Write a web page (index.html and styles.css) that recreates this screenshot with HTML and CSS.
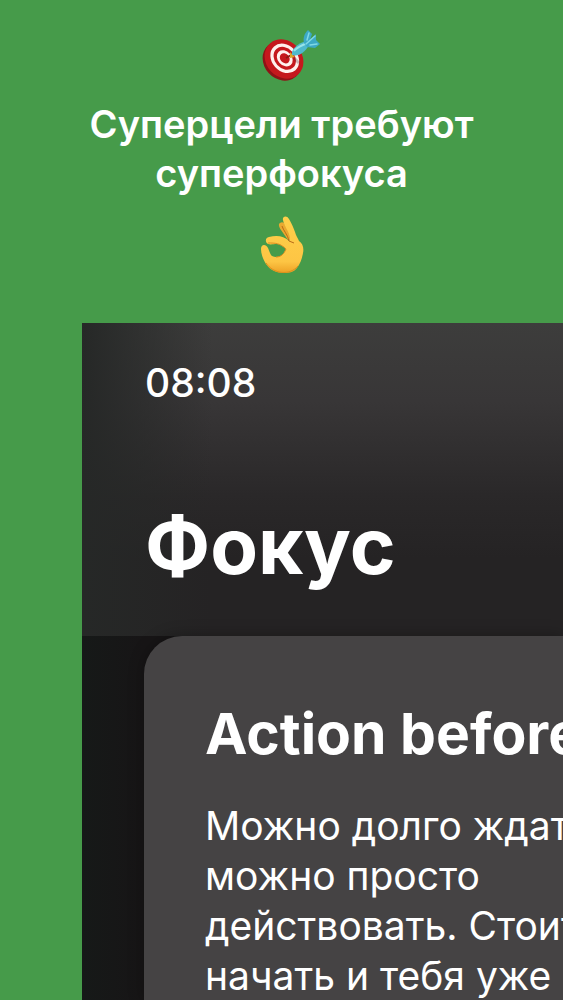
FILE: index.html
```
<!DOCTYPE html>
<html lang="ru">
<head>
  <meta charset="utf-8">
  <title>Фокус</title>
  <meta name="viewport" content="width=device-width, initial-scale=1.0">
  <link rel="stylesheet" href="styles.css">
</head>
<body>
  <header class="promo">
    <svg class="emoji" viewBox="0 0 76 60" aria-hidden="true">
      <!-- board -->
      <g transform="rotate(48 38 37)">
        <ellipse cx="38" cy="37" rx="21" ry="18" fill="#8f1216"/>
      </g>
      <g transform="rotate(48 40 35)">
        <ellipse cx="40" cy="35" rx="21" ry="18" fill="#c5181d"/>
        <ellipse cx="40" cy="34" rx="16" ry="13" fill="#fff1ee"/>
        <ellipse cx="40" cy="34" rx="12.5" ry="10" fill="#c5181d"/>
        <ellipse cx="40" cy="34" rx="9" ry="7" fill="#fff1ee"/>
        <ellipse cx="40" cy="34" rx="5.5" ry="4.5" fill="#c5181d"/>
      </g>
      <!-- dart -->
      <path d="M50 34l5 5" stroke="#5d2730" stroke-width="3" opacity="0.3"/>
      <path d="M42 34l5-3" stroke="#8c1b13" stroke-width="1.5"/>
      <path d="M46 28l5 5-5 1z" fill="#d9a62b"/>
      <path d="M48 31c-1-6 5-11 14-14l3 4c-4 7-10 12-17 10z" fill="#4fb9cd"/>
      <path d="M50 27c3-4 7-5 11-7" stroke="#97e3ea" stroke-width="2" fill="none"/>
      <path d="M60 19c-1-5 0-9 4-13l4 4-2 6 6-6 0 6 4 4-5 4-8-1z" fill="#3ca9c6"/>
      <path d="M62 20l9-8M65 9l-2 7M73 20l-7 1" stroke="#80d9e6" stroke-width="1.5" stroke-linecap="round"/>
    </svg>
    <h1 class="promo-title">Суперцели требуют суперфокуса</h1>
    <svg class="emoji" viewBox="0 0 76 60" aria-hidden="true">
      <defs>
        <linearGradient id="skin" x1="0" y1="0" x2="0" y2="1">
          <stop offset="0" stop-color="#ffd04a"/>
          <stop offset="0.8" stop-color="#fdc544"/>
          <stop offset="1" stop-color="#eda125"/>
        </linearGradient>
      </defs>
      <path d="M36 9c-2 1-1 4 1 7l7 10 5-2-9-15c-1-1-3-1-4 0z" fill="#e9a930"/>
      <path d="M39 6c-1-4 4-5 6-1 3 5 4 8 6 13 1 4 3 6 4 9 4 3 5 7 4 12-1 6-3 11-6 15-3 4-7 5-13 5-8 0-14-3-18-9-3-5-5-10-5-15 0-5 5-5 7-1l2 5c1 3 3 4 6 4 5 0 8-3 10-8-3-3-6-5-9-5-4 0-6 1-9 0-3-2-3-6 1-7 8-2 15-1 20 4l1-3c-1-7-6-12-7-18z" fill="url(#skin)"/>
      <path d="M24 29c7 0 12 0 18 6-2 5-5 8-10 8" stroke="#dc8e1f" stroke-width="1" fill="none"/>
      <path d="M38 12c1 4 6 9 7 15l5 2" stroke="#b96b18" stroke-width="1" fill="none"/>
      <path d="M22 49c7 11 24 13 32 3" stroke="#dd901c" stroke-width="1" fill="none"/>
    </svg>
  </header>

  <main class="phone">
    <div class="phone-top">
      <time class="clock">08:08</time>
      <h2 class="screen-title">Фокус</h2>
    </div>
    <div class="phone-body">
      <article class="card">
        <h3 class="card-title">Action before</h3>
        <p class="card-text">Можно долго ждать,<br>можно просто<br>действовать. Стоит<br>начать и тебя уже н</p>
      </article>
    </div>
  </main>
</body>
</html>
```
FILE: styles.css
```
* {
  box-sizing: border-box;
}

body {
  margin: 0;
  height: 100vh;
  display: flex;
  flex-direction: column;
  overflow: hidden;
  background-color: #469b4a;
  color: #fff;
  font-family: Inter, "Liberation Sans", sans-serif;
}

h1, h2, h3, p {
  margin: 0;
}

.promo {
  display: flex;
  flex-direction: column;
  align-items: center;
  gap: 16px;
  padding: 24px 64px 49px;
}

.emoji {
  width: 76px;
  height: 60px;
  flex: none;
}

.promo-title {
  font-size: 38px;
  font-weight: 600;
  line-height: 49px;
  text-align: center;
}

.phone {
  flex: 1;
  display: flex;
  flex-direction: column;
  min-height: 0;
  margin-left: 82px;
  background-color: #171616;
}

.phone-top {
  padding: 36px 0 42px 63px;
  background: linear-gradient(to right, #262827, transparent 130px),
    linear-gradient(#3d3d3c, #383637 25%, #2a2829 55%, #252324 75%);
}

.clock {
  display: block;
  font-size: 39px;
  font-weight: 500;
  line-height: 48px;
}

.screen-title {
  margin-top: 91px;
  font-size: 78px;
  font-weight: 700;
  line-height: 96px;
}

.phone-body {
  flex: 1;
  min-height: 0;
  padding-left: 62px;
  background: linear-gradient(to right, #161918, #171516 62px);
}

.card {
  height: 100%;
  padding: 60px 0 0 61px;
  overflow: hidden;
  border-top-left-radius: 38px;
  background-color: #454344;
  box-shadow: 0 0 16px rgba(0, 0, 0, 0.3);
  white-space: nowrap;
}

.card-title {
  font-size: 57px;
  font-weight: 700;
  line-height: 76px;
}

.card-text {
  margin-top: 29px;
  font-size: 39px;
  line-height: 50px;
}
```
